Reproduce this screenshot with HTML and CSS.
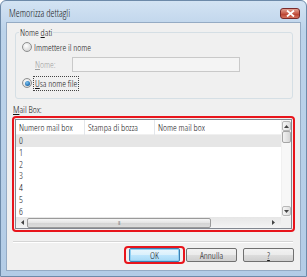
FILE: index.html
```html
<html>
<head>
    <meta charset="UTF-8">
    <title>Memorizza dettagli</title>
    <link rel="stylesheet" href="styles.css">
</head>
<body>
    <div class="window">
        <div class="titlebar">
            <span class="title">Memorizza dettagli</span>
            <span class="close">
                <svg width="9" height="7" viewBox="0 0 9 7"><path d="M1 0.5 L8 6.5 M8 0.5 L1 6.5" stroke="#fff" stroke-width="1.8"/></svg>
            </span>
        </div>
        <div class="frame">
            <div class="client">
                <fieldset class="group">
                    <legend>Nome <u>d</u>ati</legend>
                    <div class="radio-row"><span class="radio"></span><span>Immettere il nome</span></div>
                    <div class="name-row"><span class="name-label"><u>N</u>ome:</span><span class="input"></span></div>
                    <div class="radio-row row-last"><span class="radio checked"></span><span class="focus"><u>U</u>sa nome file</span></div>
                </fieldset>

                <div class="mb-label"><u>M</u>ail Box:</div>
                <div class="mark list-mark">
                    <div class="list">
                        <div class="list-body">
                            <div class="list-head">
                                <span class="col col1">Numero mail box</span>
                                <span class="col col2">Stampa di bozza</span>
                                <span class="col col3">Nome mail box</span>
                            </div>
                            <div class="list-row selected">0</div>
                            <div class="list-row">1</div>
                            <div class="list-row">2</div>
                            <div class="list-row">3</div>
                            <div class="list-row">4</div>
                            <div class="list-row">5</div>
                            <div class="list-row">6</div>
                        </div>
                        <div class="vscroll">
                            <span class="sb-btn up"><svg width="5" height="3" viewBox="0 0 5 3"><path d="M0 3 L2.5 0 L5 3 Z" fill="#444"/></svg></span>
                            <span class="vthumb"></span>
                            <span class="vtrack"></span>
                            <span class="sb-btn down"><svg width="5" height="3" viewBox="0 0 5 3"><path d="M0 0 L2.5 3 L5 0 Z" fill="#444"/></svg></span>
                        </div>
                        <div class="hscroll">
                            <span class="harrow"><svg width="3" height="5" viewBox="0 0 3 5"><path d="M3 0 L0 2.5 L3 5 Z" fill="#444"/></svg></span>
                            <span class="hthumb"><span class="grip">III</span></span>
                            <span class="htrack"></span>
                            <span class="harrow"><svg width="3" height="5" viewBox="0 0 3 5"><path d="M0 0 L3 2.5 L0 5 Z" fill="#444"/></svg></span>
                        </div>
                        <div class="corner"></div>
                    </div>
                </div>

                <div class="sep"></div>

                <div class="buttons">
                    <div class="mark btn-mark"><button class="btn default">OK</button></div>
                    <button class="btn">Annulla</button>
                    <button class="btn"><u>?</u></button>
                </div>
            </div>
        </div>
    </div>
</body>
</html>
```

FILE: styles.css
```css
* {
    box-sizing: border-box;
}
body {
    margin: 0;
    font-family: "Open Sans", "Liberation Sans", sans-serif;
    font-stretch: 78%;
    font-weight: 350;
    font-size: 9.5px;
    color: #141414;
}
.window {
    width: 307px;
    height: 277px;
    background: linear-gradient(#d3e3f3, #bcd3ea 30px, #b3cce6);
    border: 1px solid #6d8aa9;
    border-radius: 6px 6px 0 0;
    display: flex;
    flex-direction: column;
}
.titlebar {
    height: 21px;
    display: flex;
    align-items: center;
    justify-content: space-between;
    padding: 0 6px 0 8px;
}
.title {
    font-stretch: 80%;
    font-size: 10px;
    color: #1c1c1c;
    margin-top: 2px;
}
.close {
    width: 20px;
    height: 11px;
    margin-top: 3px;
    border: 1px solid #7a2a2a;
    border-radius: 3px;
    background: linear-gradient(#e3a394, #c75a48 50%, #b53b2a 51%, #d4735f);
    display: flex;
    align-items: center;
    justify-content: center;
}
.frame {
    flex: 1;
    padding: 0 5px 5px 5px;
    display: flex;
}
.client {
    flex: 1;
    background: #f0f0f0;
    border: 1px solid #95abc4;
    padding: 0 5px;
}

/* group box */
.group {
    margin: 3px 2px 0 3px;
    padding: 0 6px 8px 6px;
    border: 1px solid #d5dfe5;
    border-radius: 3px;
}
.group legend {
    padding: 0 1px;
    margin-left: -3px;
    line-height: 13px;
}
.radio-row {
    display: flex;
    align-items: center;
    height: 14px;
    margin-top: 1px;
}
.row-last {
    margin-top: 4px;
}
.radio {
    width: 10px;
    height: 10px;
    border-radius: 50%;
    border: 1px solid #8e8f8f;
    background: radial-gradient(circle at 40% 35%, #ffffff, #d9d9d9 70%, #cfcfcf);
    margin-right: 2px;
    display: flex;
    align-items: center;
    justify-content: center;
}
.radio.checked::after {
    content: "";
    width: 5px;
    height: 5px;
    border-radius: 50%;
    background: radial-gradient(circle at 40% 35%, #7ec4f0, #1c6bb0 70%, #124f8a);
}
.focus {
    outline: 1px dotted #444;
    outline-offset: 0;
    padding: 0 1px;
}
.name-row {
    display: flex;
    align-items: center;
    height: 16px;
    margin-top: 2px;
}
.name-label {
    width: 50px;
    padding-left: 13px;
    color: #a0a0a0;
}
.input {
    width: 168px;
    height: 15px;
    margin-top: 1px;
    border: 1px solid #c9c9c9;
    background: #f4f4f4;
}

/* mail box list */
.mb-label {
    margin: 5px 0 0 1px;
    line-height: 12px;
}
.mark {
    border: 2px solid #e8141b;
    border-radius: 4px;
}
.list-mark {
    padding: 1px;
    height: 116px;
}
.list {
    height: 100%;
    border: 1px solid #828790;
    background: #fff;
    display: grid;
    grid-template-columns: 1fr 10px;
    grid-template-rows: 1fr 11px;
}
.list-body {
    overflow: hidden;
}
.list-head {
    display: flex;
    height: 15px;
    align-items: center;
    border-bottom: 1px solid #f0f0f0;
}
.col {
    padding-left: 3px;
    line-height: 15px;
    white-space: nowrap;
    overflow: hidden;
    border-right: 1px solid #e3e6ea;
}
.col1 {
    width: 69px;
}
.col2 {
    width: 70px;
}
.col3 {
    border-right: none;
}
.list-row {
    height: 11.8px;
    line-height: 11.8px;
    padding-left: 3px;
}
.list-row.selected {
    background: #e6e6e6;
}

/* scrollbars */
.vscroll {
    display: flex;
    flex-direction: column;
    background: #f7f7f7;
    border-left: 1px solid #f0f0f0;
    padding: 1px 0;
}
.sb-btn {
    height: 10px;
    border: 1px solid #b8b8b8;
    border-radius: 2px;
    background: linear-gradient(90deg, #f6f6f6, #dedede);
    display: flex;
    align-items: center;
    justify-content: center;
}
.vthumb {
    height: 12px;
    border: 1px solid #a5a5a5;
    border-radius: 2px;
    background: linear-gradient(90deg, #f2f2f2, #d6d6d6);
}
.vtrack {
    flex: 1;
}
.hscroll {
    display: flex;
    align-items: center;
    background: linear-gradient(#e6e6e6, #f4f4f4);
    padding: 0 3px 0 2px;
}
.harrow {
    width: 9px;
    display: flex;
    justify-content: center;
}
.hthumb {
    width: 184px;
    height: 10px;
    border: 1px solid #9a9a9a;
    border-radius: 2px;
    background: linear-gradient(#f5f5f5, #e3e3e3 50%, #d4d4d4 51%, #dcdcdc);
    display: flex;
    align-items: center;
    justify-content: center;
}
.grip {
    font-size: 6px;
    letter-spacing: -0.5px;
    color: #555;
}
.htrack {
    flex: 1;
}
.corner {
    background: #f0f0f0;
}

/* bottom */
.sep {
    margin: 9px 2px 0 1px;
    border-top: 1px solid #d5d5d5;
    border-bottom: 1px solid #fff;
}
.buttons {
    display: flex;
    justify-content: flex-end;
    align-items: center;
    margin-top: 3px;
    padding-right: 1px;
}
.btn-mark {
    padding: 0 3px;
    margin-right: 1px;
}
.btn {
    width: 51px;
    height: 14px;
    padding: 0;
    font-family: inherit;
    font-stretch: inherit;
    font-weight: inherit;
    font-size: 9.5px;
    color: #141414;
    border: 1px solid #707070;
    border-radius: 2px;
    background: linear-gradient(#f2f2f2, #ebebeb 50%, #dddddd 51%, #cfcfcf);
}
.btn + .btn {
    margin-left: 6px;
}
.btn.default {
    border-color: #3c7fb1;
    box-shadow: inset 0 0 0 1px #8fd0f3;
    background: linear-gradient(#eaf6fd, #d9f0fc 50%, #bee6fd 51%, #a7d9f5);
}
```
